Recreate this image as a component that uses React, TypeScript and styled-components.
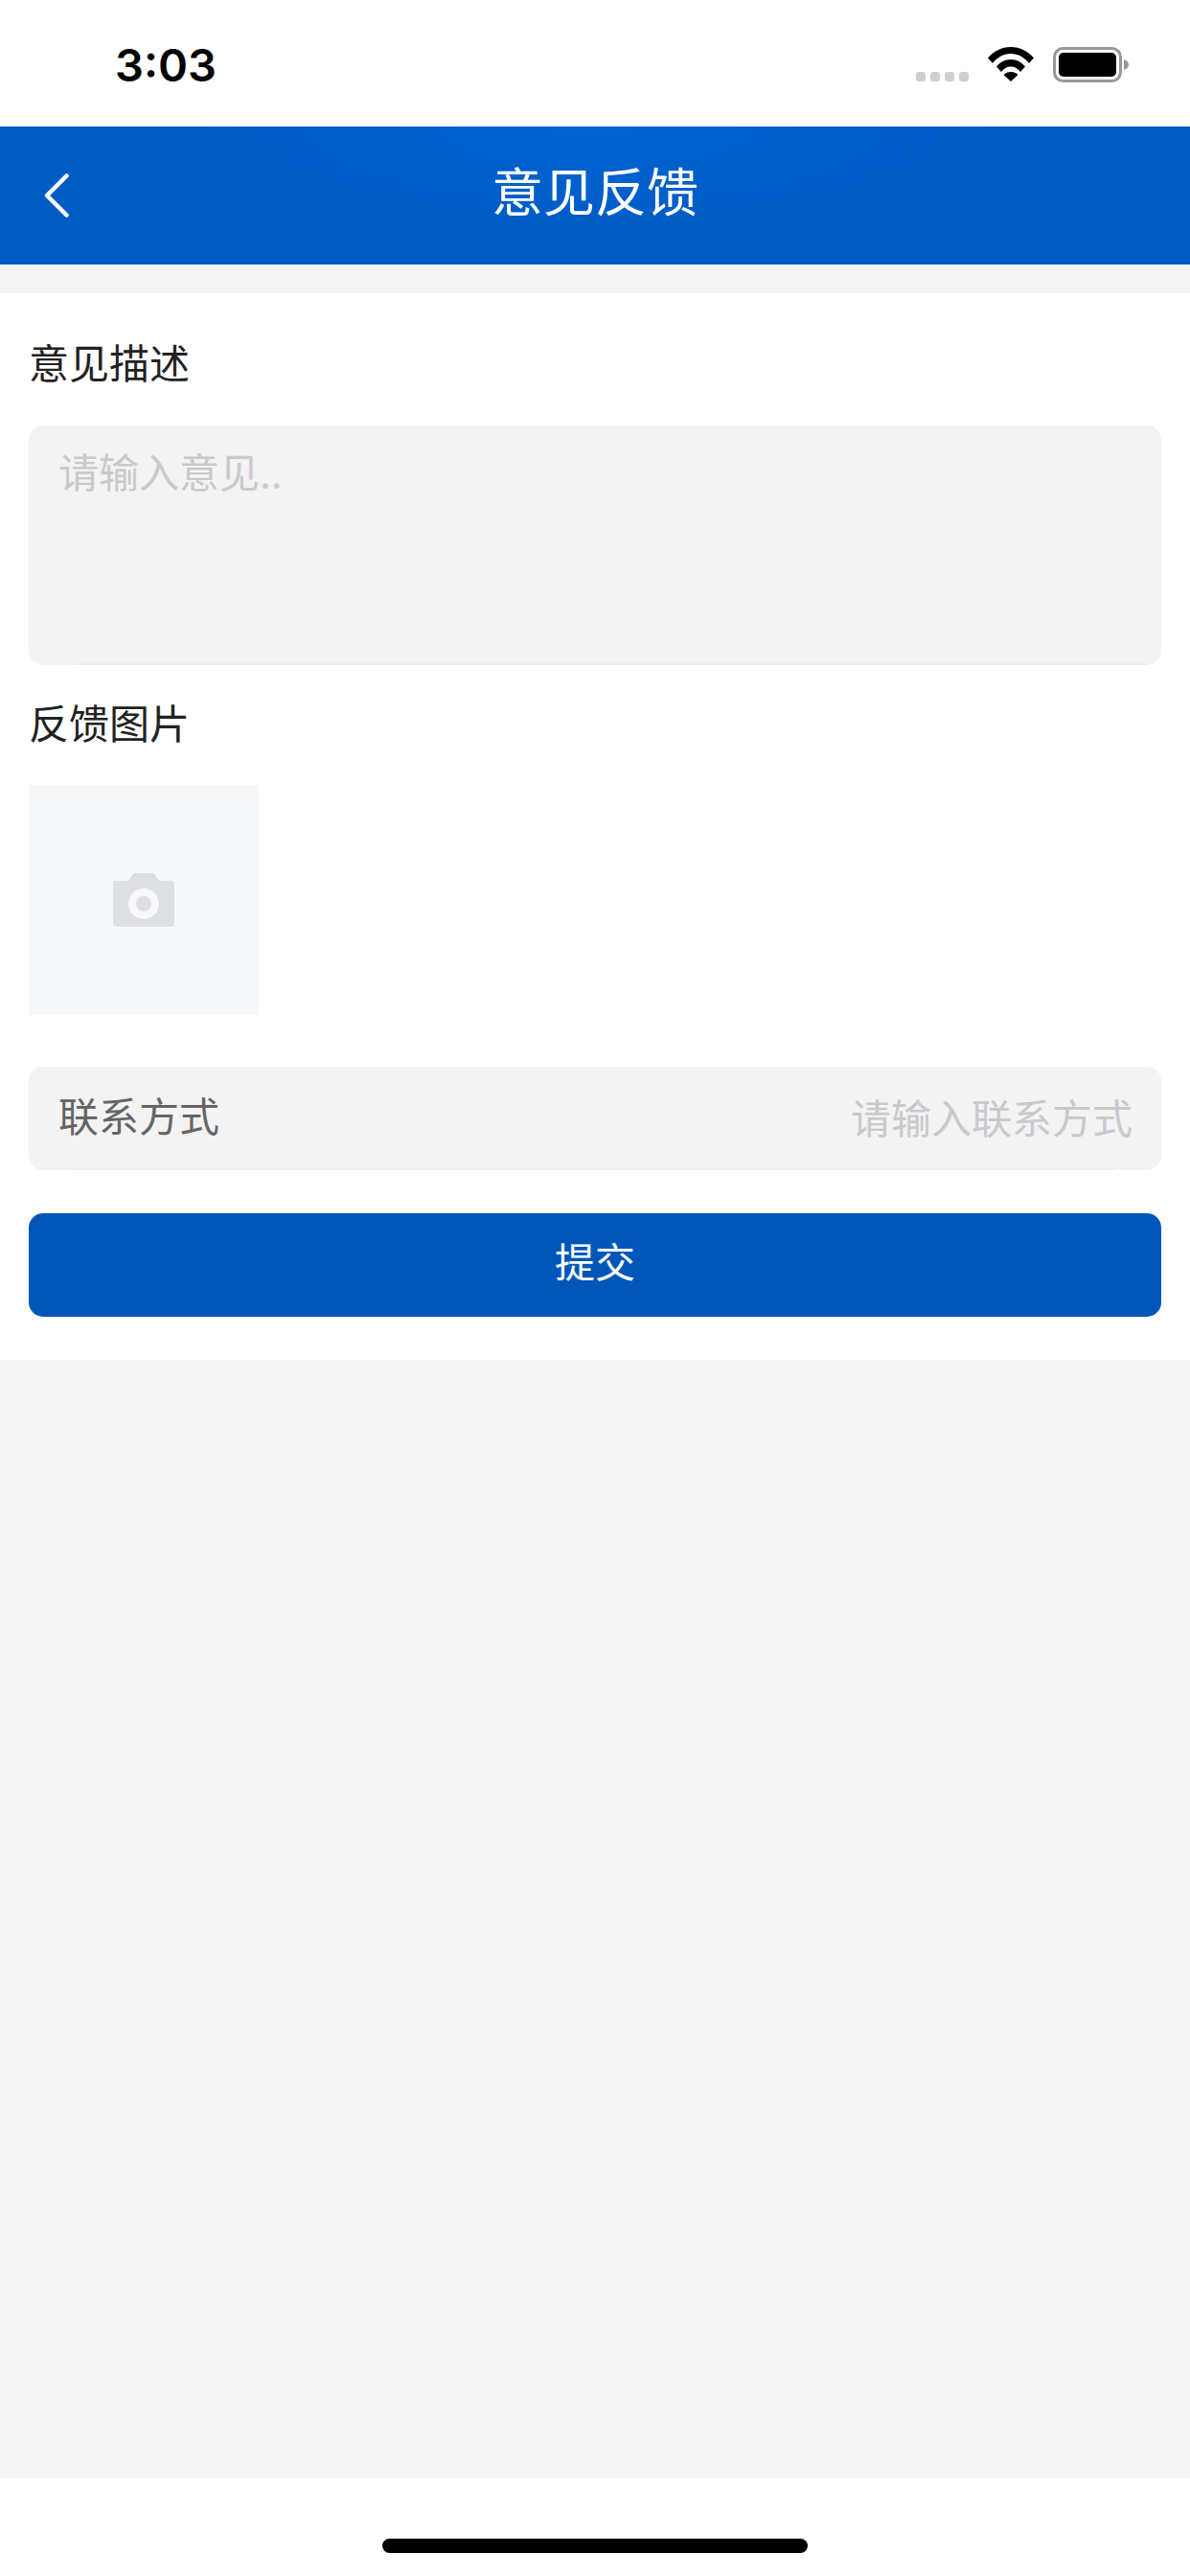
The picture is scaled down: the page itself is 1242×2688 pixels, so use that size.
import styled, { createGlobalStyle } from 'styled-components';

const GlobalStyle = createGlobalStyle`
  html, body {
    margin: 0;
    padding: 0;
    background: #fff;
  }
  * {
    box-sizing: border-box;
  }
`;

const App = () => {
  return (
    <Page>
      <GlobalStyle />
      <StatusBar>
        <Time>3:03</Time>
        <StatusIcons>
          <SignalDots>
            {[0, 1, 2, 3].map(dot => (
              <SignalDot key={dot} />
            ))}
          </SignalDots>
          <WifiIcon />
          <BatteryIcon />
        </StatusIcons>
      </StatusBar>
      <NavBar>
        <BackIcon />
        <NavTitle>意见反馈</NavTitle>
      </NavBar>
      <Content>
        <Form>
          <DescriptionLabel>意见描述</DescriptionLabel>
          <DescriptionBox>
            <DescriptionPlaceholder>请输入意见..</DescriptionPlaceholder>
          </DescriptionBox>
          <PictureLabel>反馈图片</PictureLabel>
          <PictureButton>
            <CameraIcon />
          </PictureButton>
          <ContactRow>
            <ContactLabel>联系方式</ContactLabel>
            <ContactPlaceholder>请输入联系方式</ContactPlaceholder>
          </ContactRow>
          <SubmitButton type="button">提交</SubmitButton>
        </Form>
      </Content>
      <HomeArea>
        <HomeBar />
      </HomeArea>
    </Page>
  );
};

export default App;

const WifiIcon = () => (
  <svg width="48" height="36" viewBox="0 0 48 36" fill="#000">
    <path d="M0 11.500C6 4.500 14.500 0 24 0s18 4.500 24 11.500L43 17C38.500 11 31.500 7 24 7S9.500 11 5 17z" />
    <path d="M9 20.500C12.500 16 18 13 24 13s11.500 3 15 7.500L34 26C31.500 22.500 28 20.500 24 20.500S16.500 22.500 14 26z" />
    <path d="M16.500 29C18.500 27 21 26 24 26s5.500 1 7.500 3L24 36z" />
  </svg>
);

const BatteryIcon = () => (
  <svg width="79" height="37" viewBox="0 0 79 37">
    <rect x="1.500" y="1.500" width="69" height="34" rx="9" fill="#fff" stroke="#979797" strokeWidth="3" />
    <rect x="6" y="6" width="60" height="25" rx="5" fill="#000" />
    <path d="M74 13c3 1 5 3 5 5.500s-2 4.500-5 5.500z" fill="#979797" />
  </svg>
);

const BackIcon = () => (
  <BackSvg width="26" height="46" viewBox="0 0 26 46" fill="none">
    <path d="M23.500 2.500 3 23l20.500 20.500" stroke="#fff" strokeWidth="4.500" strokeLinecap="round" strokeLinejoin="round" />
  </BackSvg>
);

const CameraIcon = () => (
  <svg width="64" height="56" viewBox="0 0 64 56">
    <path
      d="M3 8h13l4.500-6.500A3 3 0 0 1 23 0h18a3 3 0 0 1 2.500 1.500L48 8h13a3 3 0 0 1 3 3v42a3 3 0 0 1-3 3H3a3 3 0 0 1-3-3V11a3 3 0 0 1 3-3z"
      fill="#dedfe1"
    />
    <circle cx="32" cy="32" r="12" fill="none" stroke="#f6f7f9" strokeWidth="8" />
  </svg>
);

const Page = styled.div`
  display: flex;
  flex-direction: column;
  width: 1242px;
  height: 2688px;
  overflow: hidden;
  background: #f5f5f5;
  font-family: 'Noto Sans CJK SC', 'Liberation Sans', sans-serif;
`;

const StatusBar = styled.div`
  display: flex;
  justify-content: space-between;
  height: 132px;
  padding: 36px 64px 0 120px;
  background: #fff;
`;

const Time = styled.div`
  font-family: 'Inter', 'Liberation Sans', sans-serif;
  font-size: 47px;
  font-weight: 600;
  line-height: 64px;
  color: #000;
`;

const StatusIcons = styled.div`
  display: flex;
  align-items: flex-start;
  gap: 20px;
  padding-top: 13px;
`;

const SignalDots = styled.div`
  display: flex;
  gap: 5px;
  margin: 26px 0 0;
`;

const SignalDot = styled.span`
  width: 10px;
  height: 10px;
  border-radius: 3px;
  background: #cfcfcf;
`;

const NavBar = styled.div`
  display: grid;
  grid-template-columns: 1fr auto 1fr;
  align-items: center;
  height: 144px;
  padding: 0 46px;
  background: radial-gradient(ellipse 420px 110px at 50% 0, #0064d4, #005cc5);
`;

const BackSvg = styled.svg`
  display: block;
`;

const NavTitle = styled.div`
  margin-top: -13px;
  font-size: 54px;
  line-height: 70px;
  color: #fff;
`;

const Content = styled.div`
  flex: 1;
  padding-top: 30px;
`;

const Form = styled.div`
  display: flex;
  flex-direction: column;
  align-items: stretch;
  height: 1113px;
  padding: 41px 30px 0;
  background: #fff;
`;

const FieldLabel = styled.div`
  font-size: 42px;
  line-height: 60px;
  color: #222;
`;

const DescriptionLabel = styled(FieldLabel)`
  margin-bottom: 37px;
`;

const PictureLabel = styled(FieldLabel)`
  margin: 29px 0 36px;
`;

const DescriptionBox = styled.div`
  position: relative;
  height: 250px;
  padding: 17px 31px;
  border-radius: 15px;
  background: #f3f3f4;
  &::after {
    content: '';
    position: absolute;
    left: 48px;
    right: 16px;
    bottom: 0;
    height: 2px;
    background: #ededf0;
  }
`;

const DescriptionPlaceholder = styled.div`
  font-size: 42px;
  line-height: 60px;
  color: #c8c9cc;
`;

const PictureButton = styled.div`
  display: flex;
  align-items: center;
  justify-content: center;
  width: 240px;
  height: 240px;
  background: #f7f8fa;
`;

const ContactRow = styled.div`
  position: relative;
  display: flex;
  align-items: center;
  justify-content: space-between;
  height: 108px;
  margin-top: 54px;
  padding: 0 30px 4px 31px;
  border-radius: 15px;
  background: #f3f3f4;
  &::after {
    content: '';
    position: absolute;
    left: 46px;
    right: 46px;
    bottom: 0;
    height: 2px;
    background: #ededf0;
  }
`;

const ContactLabel = styled.div`
  margin-top: -4px;
  font-size: 42px;
  line-height: 60px;
  color: #646566;
`;

const ContactPlaceholder = styled.div`
  font-size: 42px;
  line-height: 60px;
  color: #c8c9cc;
`;

const SubmitButton = styled.button`
  height: 108px;
  margin-top: 45px;
  padding: 0 0 11px;
  border: none;
  border-radius: 15px;
  background: #0056b8;
  font-family: inherit;
  font-size: 42px;
  color: #fff;
`;

const HomeArea = styled.div`
  display: flex;
  justify-content: center;
  height: 102px;
  padding-top: 63px;
  background: #fff;
`;

const HomeBar = styled.div`
  width: 444px;
  height: 15px;
  border-radius: 8px;
  background: #000;
`;
